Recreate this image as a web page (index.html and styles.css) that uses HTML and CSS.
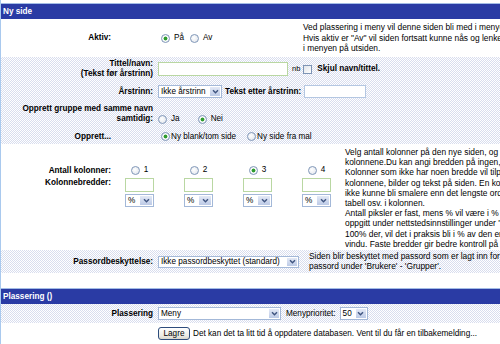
FILE: index.html
```html
<!DOCTYPE html>
<html lang="no">

<head>
  <meta charset="UTF-8" />
  <title>Ny side</title>
  <link rel="stylesheet" href="styles.css">
</head>

<body>
  <div class="page">

    <div class="bar">Ny side</div>

    <div class="row row-aktiv">
      <div class="lbl lbl-short">Aktiv:</div>
      <div class="val val-short">
        <label class="opt"><input type="radio" class="radio" name="aktiv" checked>På</label>
        <label class="opt"><input type="radio" class="radio" name="aktiv">Av</label>
      </div>
      <div class="desc">
        Ved plassering i meny vil denne siden bli med i menyen.<br>
        Hvis aktiv er "Av" vil siden fortsatt kunne nås og lenkes til, men vises ikke<br>
        i menyen på utsiden.
      </div>
    </div>

    <div class="dots">
      <div class="row row-tittel">
        <div class="lbl lbl-wide">Tittel/navn:<br>(Tekst før årstrinn)</div>
        <input type="text" class="txt txt-title">
        <span class="nb">nb</span>
        <input type="checkbox" class="check">
        <span class="bold">Skjul navn/tittel.</span>
      </div>

      <div class="row row-trinn">
        <div class="lbl lbl-wide">Årstrinn:</div>
        <span class="sel sel-trinn"><span class="sel-text">Ikke årstrinn</span><span class="arr"><svg width="7" height="5" viewBox="0 0 7 5"><path d="M1 1.2 L3.5 3.8 L6 1.2" fill="none" stroke="#3f5580" stroke-width="1.4"/></svg></span></span>
        <span class="bold after-sel">Tekst etter årstrinn:</span>
        <input type="text" class="txt txt-after">
      </div>

      <div class="row row-gruppe">
        <div class="lbl lbl-wide">Opprett gruppe med samme navn<br>samtidig:</div>
        <div class="val">
          <label class="opt opt-ja"><input type="radio" class="radio" name="gruppe">Ja</label>
          <label class="opt"><input type="radio" class="radio" name="gruppe" checked>Nei</label>
        </div>
      </div>

      <div class="row row-opprett">
        <div class="lbl lbl-short">Opprett...</div>
        <div class="val val-short">
          <label class="opt opt-tight"><input type="radio" class="radio" name="mal" checked>Ny blank/tom side</label>
          <label class="opt opt-tight"><input type="radio" class="radio" name="mal">Ny side fra mal</label>
        </div>
      </div>
    </div>

    <div class="cols-row">
      <div class="cols-left">
        <div class="lbl cols-lbl">Antall kolonner:<br>Kolonnebredder:</div>
        <div class="colset">
          <div class="col">
            <label class="opt"><input type="radio" class="radio" name="kol">1</label>
            <input type="text" class="txt col-w">
            <span class="sel sel-pct"><span class="sel-text">%</span><span class="arr"><svg width="7" height="5" viewBox="0 0 7 5"><path d="M1 1.2 L3.5 3.8 L6 1.2" fill="none" stroke="#3f5580" stroke-width="1.4"/></svg></span></span>
          </div>
          <div class="col">
            <label class="opt"><input type="radio" class="radio" name="kol">2</label>
            <input type="text" class="txt col-w">
            <span class="sel sel-pct"><span class="sel-text">%</span><span class="arr"><svg width="7" height="5" viewBox="0 0 7 5"><path d="M1 1.2 L3.5 3.8 L6 1.2" fill="none" stroke="#3f5580" stroke-width="1.4"/></svg></span></span>
          </div>
          <div class="col">
            <label class="opt"><input type="radio" class="radio" name="kol" checked>3</label>
            <input type="text" class="txt col-w">
            <span class="sel sel-pct"><span class="sel-text">%</span><span class="arr"><svg width="7" height="5" viewBox="0 0 7 5"><path d="M1 1.2 L3.5 3.8 L6 1.2" fill="none" stroke="#3f5580" stroke-width="1.4"/></svg></span></span>
          </div>
          <div class="col">
            <label class="opt"><input type="radio" class="radio" name="kol">4</label>
            <input type="text" class="txt col-w">
            <span class="sel sel-pct"><span class="sel-text">%</span><span class="arr"><svg width="7" height="5" viewBox="0 0 7 5"><path d="M1 1.2 L3.5 3.8 L6 1.2" fill="none" stroke="#3f5580" stroke-width="1.4"/></svg></span></span>
          </div>
        </div>
      </div>
      <div class="desc desc-cols">
        Velg antall kolonner på den nye siden, og eventuelt bredden på<br>
        kolonnene.Du kan angi bredden på ingen, noen eller alle.<br>
        Kolonner som ikke har noen bredde vil tilpasse seg de andre<br>
        kolonnene, bilder og tekst på siden. En kolonne vil likevel<br>
        ikke kunne bli smalere enn det lengste ordet, bildet,<br>
        tabell osv. i kolonnen.<br>
        Antall piksler er fast, mens % vil være i % av bredden som er<br>
        oppgitt under nettstedsinnstillinger under 'Tema'. Står det<br>
        100% der, vil det i praksis bli i % av den enkeltes<br>
        vindu. Faste bredder gir bedre kontroll på layouten.
      </div>
    </div>

    <div class="row row-passord dots">
      <div class="lbl lbl-wide">Passordbeskyttelse:</div>
      <span class="sel sel-passord"><span class="sel-text">Ikke passordbeskyttet (standard)</span><span class="arr"><svg width="7" height="5" viewBox="0 0 7 5"><path d="M1 1.2 L3.5 3.8 L6 1.2" fill="none" stroke="#3f5580" stroke-width="1.4"/></svg></span></span>
      <div class="desc desc-passord">
        Siden blir beskyttet med passord som er lagt inn for gruppene. Sett<br>
        passord under 'Brukere' - 'Grupper'.
      </div>
    </div>

    <div class="spacer"></div>

    <div class="bar">Plassering ()</div>

    <div class="row row-plass dots">
      <div class="lbl lbl-wide">Plassering</div>
      <span class="sel sel-plass"><span class="sel-text">Meny</span><span class="arr"><svg width="7" height="5" viewBox="0 0 7 5"><path d="M1 1.2 L3.5 3.8 L6 1.2" fill="none" stroke="#3f5580" stroke-width="1.4"/></svg></span></span>
      <span class="prio">Menyprioritet:</span>
      <span class="sel sel-prio"><span class="sel-text">50</span><span class="arr"><svg width="7" height="5" viewBox="0 0 7 5"><path d="M1 1.2 L3.5 3.8 L6 1.2" fill="none" stroke="#3f5580" stroke-width="1.4"/></svg></span></span>
    </div>

    <div class="row row-lagre">
      <button type="button" class="btn">Lagre</button>
      <span>Det kan det ta litt tid å oppdatere databasen. Vent til du får en tilbakemelding...</span>
    </div>

  </div>
</body>

</html>
```

FILE: styles.css
```css
html,
body {
  margin: 0;
  overflow: hidden;
  background: #fff;
}

body {
  font-family: "Liberation Sans", Arial, sans-serif;
  font-size: 8.2px;
  line-height: 10px;
  color: #000;
  width: 500px;
  height: 344px;
}

.page {
  border-left: 1px solid #a9c9ee;
  padding-top: 3px;
  height: 341px;
}

.bar {
  border-top: 1px solid #a3bce6;
  background: #2a3ba4;
  color: #fff;
  font-weight: bold;
  height: 15px;
  line-height: 15px;
  padding-left: 2px;
}

.dots {
  background-color: #fff;
  background-image: repeating-conic-gradient(#d8ddee 0 25%, #fff 0 50%);
  background-size: 2px 2px;
}

.row {
  display: flex;
  align-items: center;
  white-space: nowrap;
}

.lbl {
  font-weight: bold;
  text-align: right;
  flex: none;
}

.lbl-short {
  width: 110px;
  margin-right: 50px;
}

.lbl-wide {
  width: 152px;
  margin-right: 5px;
}

.bold {
  font-weight: bold;
}

.val {
  display: flex;
  align-items: center;
  flex: none;
}

.val-short {
  width: 142px;
}

.desc {
  white-space: nowrap;
  flex: none;
  font-size: 8.4px;
}

/* form bits */
.opt {
  display: inline-flex;
  align-items: center;
  margin-right: 6px;
}

.opt-ja {
  margin-right: 18px;
}

.opt-tight {
  margin-right: 11px;
}

.opt-tight .radio {
  margin-right: 1px;
}

.radio {
  -webkit-appearance: none;
  appearance: none;
  box-sizing: border-box;
  width: 9px;
  height: 9px;
  margin: 0 4px 0 0;
  border: 1px solid #8097b8;
  border-radius: 50%;
  background: radial-gradient(circle at 40% 40%, #fff, #dde2ea);
}

.radio:checked {
  background: radial-gradient(circle, #2e9c2e 0 1.6px, #fff 2.3px, #e0e4ec 100%);
}

.check {
  -webkit-appearance: none;
  appearance: none;
  box-sizing: border-box;
  width: 9px;
  height: 9px;
  margin: 0 5px 0 3px;
  border: 1px solid #7d94b5;
  background: linear-gradient(135deg, #e0e4ea, #fff);
}

.txt {
  box-sizing: border-box;
  height: 14px;
  margin: 0;
  padding: 0 2px;
  border: 1px solid #b9d7a2;
  background: #fff;
  font: inherit;
}

.sel {
  display: inline-flex;
  box-sizing: border-box;
  height: 13px;
  border: 1px solid #a3b8d8;
  background: #fff;
  flex: none;
}

.sel-text {
  flex: 1;
  padding-left: 2px;
  line-height: 11px;
  overflow: hidden;
}

.arr {
  width: 12px;
  flex: none;
  display: flex;
  align-items: center;
  justify-content: center;
  background: linear-gradient(#e3e9f6, #bccae6);
  border: 1px solid #fff;
  box-sizing: border-box;
}

/* rows */
.row-aktiv {
  height: 38px;
}

.row-aktiv .desc {
  line-height: 10.5px;
}

.row-tittel {
  height: 24px;
}

.txt-title {
  width: 130px;
}

.nb {
  margin-left: 4px;
  font-size: 7.5px;
}

.row-trinn {
  height: 21px;
}

.sel-trinn {
  width: 64px;
}

.after-sel {
  margin: 0 3px 0 3px;
}

.txt-after {
  width: 62px;
  height: 13px;
  border-color: #b4c7e2;
}

.row-gruppe {
  height: 24px;
  align-items: flex-end;
  padding-bottom: 2px;
  box-sizing: border-box;
}

.row-opprett {
  height: 18px;
  padding-top: 3px;
  box-sizing: border-box;
}

/* kolonner */
.cols-row {
  display: flex;
  height: 106px;
}

.cols-left {
  display: flex;
  width: 344px;
  padding-top: 21px;
  box-sizing: border-box;
  flex: none;
}

.cols-lbl {
  width: 110px;
  margin-right: 14px;
  line-height: 12px;
  white-space: nowrap;
}

.colset {
  display: flex;
  gap: 30px;
}

.col {
  width: 29px;
  display: flex;
  flex-direction: column;
  align-items: center;
}

.col .opt {
  margin: 0;
  height: 10px;
}

.col-w {
  width: 29px;
  margin-top: 3px;
}

.sel-pct {
  width: 29px;
  margin-top: 2px;
}

.sel-pct .arr {
  width: 14px;
}

.desc-cols {
  padding-top: 3px;
  line-height: 10.2px;
}

/* passord */
.row-passord {
  height: 23px;
}

.sel-passord {
  width: 141px;
  height: 12px;
  margin-right: 10px;
}

.sel-passord .sel-text {
  line-height: 10px;
}

.desc-passord {
  line-height: 9.5px;
}

.spacer {
  height: 15px;
}

/* plassering */
.row-plass {
  height: 19px;
}

.sel-plass {
  width: 123px;
}

.prio {
  margin: 0 4px 0 5px;
}

.sel-prio {
  width: 28px;
}

.row-lagre {
  height: 21px;
  padding-left: 157px;
}

.btn {
  box-sizing: border-box;
  width: 32px;
  height: 13px;
  margin: 0 3px 0 0;
  padding: 0;
  border: 1px solid #2d4c7c;
  border-radius: 3px;
  background: linear-gradient(#ffffff, #ecebe4 70%, #d8d6cc);
  font: inherit;
  line-height: 11px;
  color: #000;
}
```
